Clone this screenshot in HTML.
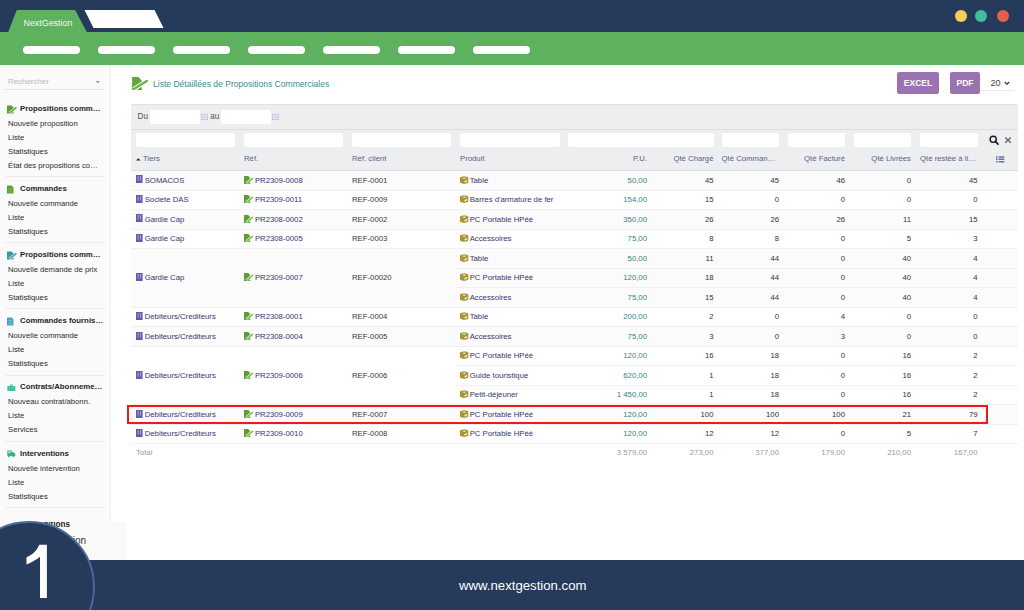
<!DOCTYPE html>
<html><head><meta charset="utf-8">
<style>
*{margin:0;padding:0;box-sizing:border-box}
html,body{width:1024px;height:610px;overflow:hidden;background:#fff;font-family:"Liberation Sans",sans-serif;color:#333}
.a{position:absolute;white-space:nowrap}
.pill{position:absolute;top:46px;height:8px;width:57px;border-radius:4px;background:#fff}
.dot{position:absolute;top:10px;width:12px;height:12px;border-radius:50%}
.si{position:absolute;left:8px;font-size:7.7px;color:#2a2a2a;line-height:10px;white-space:nowrap}
.sh{position:absolute;left:20px;font-size:7.8px;font-weight:bold;color:#1e1e1e;line-height:10px;white-space:nowrap}
.sep{position:absolute;left:5px;width:100px;height:1px;background:#ebebeb}
.tb{font-size:7.75px;line-height:10px}
.btn{position:absolute;top:72px;height:22px;background:#9b72b0;color:#fff;font-weight:bold;font-size:8.5px;line-height:22px;text-align:center;border-radius:2px}
</style></head><body>
<div class="a" style="left:0;top:0;width:1024px;height:32px;background:#263a5c"></div>
<div class="a" style="left:0;top:32px;width:1024px;height:33px;background:#5db15f"></div>
<svg class="a" style="left:0;top:0" width="200" height="40"><path d="M8 32.5 L16.2 11.2 Q16.8 10 18 10 L74 10 Q75.2 10 75.8 11.2 L87 32.5 Z" fill="#5db15f"/><path d="M84.5 10 L154.5 10 L163.5 28 L93.5 28 Z" fill="#fff"/></svg>
<div class="a" style="left:23.5px;top:18px;font-size:8.9px;line-height:11px;color:#f4f8f4">NextGestion</div>
<div class="dot" style="left:954.5px;background:#f8ce5a"></div>
<div class="dot" style="left:975px;background:#3fbf9f"></div>
<div class="dot" style="left:997px;background:#e4604c"></div>
<div class="pill" style="left:23px"></div>
<div class="pill" style="left:98px"></div>
<div class="pill" style="left:173px"></div>
<div class="pill" style="left:248px"></div>
<div class="pill" style="left:323px"></div>
<div class="pill" style="left:398px"></div>
<div class="pill" style="left:473px"></div>
<div class="a" style="left:0;top:65px;width:111px;height:456.5px;background:#fafafa;border-right:1px solid #efefef"></div>
<div class="a" style="left:8px;top:77.2px;font-size:7.9px;line-height:10px;color:#b8b8b8">Rechercher</div>
<svg class="a" style="left:95.8px;top:81.2px" width="4" height="3"><path d="M0 0h3.6L1.8 2.3z" fill="#888"/></svg>
<div class="a" style="left:5px;top:88.5px;width:98px;height:1px;background:#e3e3e3"></div>
<svg class="a" style="left:7px;top:104.5px" width="11" height="9" viewBox="0 0 11 9"><path d="M0 0.5H4.6L6.6 2.5V8.5H0Z" fill="#5ba12f"/><path d="M2.4 8L9.6 2.2" stroke="#f8f8f8" stroke-width="2.6"/><path d="M3 7.5L9.4 2.4" stroke="#5ba12f" stroke-width="1.5"/><path d="M2 8.4l0.5-1.6 1.1 1z" fill="#5ba12f"/></svg>
<div class="sh" style="top:103.5px">Propositions comm…</div>
<div class="si" style="top:118.5px">Nouvelle proposition</div>
<div class="si" style="top:132.5px">Liste</div>
<div class="si" style="top:146.5px">Statistiques</div>
<div class="si" style="top:160.5px">État des propositions co…</div>
<div class="sep" style="top:176.0px"></div>
<svg class="a" style="left:7px;top:184.7px" width="8" height="9" viewBox="0 0 8 9"><path d="M0 0.5h4.5l2 2v6H0z" fill="#5ba12f"/><path d="M1.3 3.5h4M1.3 5.3h4M1.3 7h4" stroke="#fff" stroke-width="0.5" opacity=".45"/></svg>
<div class="sh" style="top:183.7px">Commandes</div>
<div class="si" style="top:198.7px">Nouvelle commande</div>
<div class="si" style="top:212.7px">Liste</div>
<div class="si" style="top:226.7px">Statistiques</div>
<div class="sep" style="top:242.2px"></div>
<svg class="a" style="left:7px;top:250.9px" width="11" height="9" viewBox="0 0 11 9"><path d="M0 0.5H4.6L6.6 2.5V8.5H0Z" fill="#3c9aa6"/><path d="M2.4 8L9.6 2.2" stroke="#f8f8f8" stroke-width="2.6"/><path d="M3 7.5L9.4 2.4" stroke="#3c9aa6" stroke-width="1.5"/><path d="M2 8.4l0.5-1.6 1.1 1z" fill="#3c9aa6"/></svg>
<div class="sh" style="top:249.9px">Propositions comm…</div>
<div class="si" style="top:264.9px">Nouvelle demande de prix</div>
<div class="si" style="top:278.9px">Liste</div>
<div class="si" style="top:292.9px">Statistiques</div>
<div class="sep" style="top:308.4px"></div>
<svg class="a" style="left:7px;top:317.1px" width="8" height="9" viewBox="0 0 8 9"><path d="M0 0.5h4.5l2 2v6H0z" fill="#45a5c2"/><path d="M1.3 3.5h4M1.3 5.3h4M1.3 7h4" stroke="#fff" stroke-width="0.5" opacity=".45"/></svg>
<div class="sh" style="top:316.1px">Commandes fournis…</div>
<div class="si" style="top:331.1px">Nouvelle commande</div>
<div class="si" style="top:345.1px">Liste</div>
<div class="si" style="top:359.1px">Statistiques</div>
<div class="sep" style="top:374.6px"></div>
<svg class="a" style="left:7px;top:383.3px" width="9" height="9" viewBox="0 0 9 9"><path d="M2.7 1.5h3v1.5h2.6V8H0.4V3h2.3z" fill="#3cc0a0"/><path d="M3.4 2.2h1.6" stroke="#fff" stroke-width="0.6"/><path d="M2.5 3v5M6 3v5" stroke="#fff" stroke-width="0.4" opacity=".4"/></svg>
<div class="sh" style="top:382.3px">Contrats/Abonneme…</div>
<div class="si" style="top:397.3px">Nouveau contrat/abonn.</div>
<div class="si" style="top:411.3px">Liste</div>
<div class="si" style="top:425.3px">Services</div>
<div class="sep" style="top:440.8px"></div>
<svg class="a" style="left:7px;top:448.6px" width="9" height="9" viewBox="0 0 9 9"><path d="M0.3 1.5h4.5v1.8h2L8.3 5V7H0.3z" fill="#34b28e"/><rect x="1.3" y="2.4" width="2.2" height="1.6" fill="#fff" opacity=".7"/><circle cx="2" cy="7.3" r="0.9" fill="#34b28e"/><circle cx="6.3" cy="7.3" r="0.9" fill="#34b28e"/></svg>
<div class="sh" style="top:448.5px">Interventions</div>
<div class="si" style="top:463.5px">Nouvelle intervention</div>
<div class="si" style="top:477.5px">Liste</div>
<div class="si" style="top:491.5px">Statistiques</div>
<div class="sep" style="top:507.0px"></div>
<svg class="a" style="left:130px;top:75px" width="20" height="17" viewBox="0 0 20 17"><path d="M2.1 2H8.3L11.8 5.5V15H2.1Z" fill="#62a53c"/><path d="M3.8 14.2L17.6 5.6" stroke="#fff" stroke-width="4.4"/><path d="M4.6 13.5L16.8 6" stroke="#6db34a" stroke-width="2.6" stroke-linecap="round"/><path d="M3.4 14.4l0.6-2 1.6 1.4z" fill="#6db34a"/></svg>
<div class="a" style="left:153px;top:79px;font-size:8.55px;line-height:11px;color:#3d8c8c">Liste Détaillées de Propositions Commerciales</div>
<div class="btn" style="left:897px;width:42px">EXCEL</div>
<div class="btn" style="left:950px;width:30px">PDF</div>
<div class="a" style="left:990.5px;top:78px;font-size:9px;line-height:11px;color:#444">20</div>
<svg class="a" style="left:1004px;top:81px" width="6" height="5"><path d="M0.8 1l2.2 2.2L5.2 1" stroke="#333" stroke-width="1.2" fill="none"/></svg>
<div class="a" style="left:980px;top:90px;width:34px;height:1px;background:#e8e8e8"></div>
<div class="a" style="left:131px;top:104px;width:887px;height:67px;background:#eceef0;border-top:1px solid #e0e1e4"></div>
<div class="a" style="left:131px;top:129px;width:887px;height:1px;background:#dcdde0"></div>
<div class="a" style="left:137.5px;top:111.5px;font-size:8.2px;line-height:10px;color:#555">Du</div>
<div class="a" style="left:149.5px;top:109.5px;width:50.3px;height:14.5px;background:#fff;border-radius:2px"></div>
<svg class="a" style="left:200.5px;top:113.6px" width="7" height="6" viewBox="0 0 7 6"><rect x="0.4" y="0.4" width="6" height="5.2" fill="#ece6f6" stroke="#c9bde3" stroke-width="0.8"/><rect x="2" y="2.4" width="3" height="1" fill="#c2b6de"/></svg>
<div class="a" style="left:210.3px;top:111.5px;font-size:8.2px;line-height:10px;color:#555">au</div>
<div class="a" style="left:221px;top:109.5px;width:49.5px;height:14.5px;background:#fff;border-radius:2px"></div>
<svg class="a" style="left:271.5px;top:113.6px" width="7" height="6" viewBox="0 0 7 6"><rect x="0.4" y="0.4" width="6" height="5.2" fill="#ece6f6" stroke="#c9bde3" stroke-width="0.8"/><rect x="2" y="2.4" width="3" height="1" fill="#c2b6de"/></svg>
<div class="a" style="left:135.6px;top:133px;width:99.4px;height:14px;background:#fff;border-radius:2px"></div>
<div class="a" style="left:243.8px;top:133px;width:99.0px;height:14px;background:#fff;border-radius:2px"></div>
<div class="a" style="left:351.5px;top:133px;width:99.5px;height:14px;background:#fff;border-radius:2px"></div>
<div class="a" style="left:459.7px;top:133px;width:100.0px;height:14px;background:#fff;border-radius:2px"></div>
<div class="a" style="left:567.5px;top:133px;width:146.1px;height:14px;background:#fff;border-radius:2px"></div>
<div class="a" style="left:721.5px;top:133px;width:57.5px;height:14px;background:#fff;border-radius:2px"></div>
<div class="a" style="left:788px;top:133px;width:57.0px;height:14px;background:#fff;border-radius:2px"></div>
<div class="a" style="left:854px;top:133px;width:57.0px;height:14px;background:#fff;border-radius:2px"></div>
<div class="a" style="left:920px;top:133px;width:57.5px;height:14px;background:#fff;border-radius:2px"></div>
<svg class="a" style="left:988px;top:134px" width="12" height="12" viewBox="0 0 12 12"><circle cx="5.2" cy="5.3" r="3.1" stroke="#1a1a1a" stroke-width="1.4" fill="none"/><path d="M7.5 7.6L10 10.1" stroke="#1a1a1a" stroke-width="1.7" stroke-linecap="round"/></svg>
<svg class="a" style="left:1004px;top:136px" width="8" height="8" viewBox="0 0 8 8"><path d="M1.3 1.5L6.7 6.8M6.7 1.5L1.3 6.8" stroke="#6a6a6a" stroke-width="1.5"/></svg>
<svg class="a" style="left:135.8px;top:157.6px" width="5" height="3"><path d="M0 2.4L2.3 0.2 4.6 2.4z" fill="#262a4a"/></svg>
<div class="a tb" style="left:143px;top:154.2px;color:#5a5f8c">Tiers</div>
<div class="a tb" style="left:244px;top:154.2px;color:#5a5f8c">Réf.</div>
<div class="a tb" style="left:352px;top:154.2px;color:#5a5f8c">Réf. client</div>
<div class="a tb" style="left:460px;top:154.2px;color:#5a5f8c">Produit</div>
<div class="a tb" style="right:377px;top:154.2px;color:#5a5f8c">P.U.</div>
<div class="a tb" style="right:310.5px;top:154.2px;color:#5a5f8c">Qté Chargé</div>
<div class="a tb" style="left:721.5px;top:154.2px;color:#5a5f8c">Qté Comman…</div>
<div class="a tb" style="right:179px;top:154.2px;color:#5a5f8c">Qté Facturé</div>
<div class="a tb" style="right:113px;top:154.2px;color:#5a5f8c">Qté Livrées</div>
<div class="a tb" style="left:920px;top:154.2px;color:#5a5f8c">Qté restée à li…</div>
<svg class="a" style="left:996px;top:156px" width="9" height="7" viewBox="0 0 9 7"><path d="M0 0.3h1.6v1.5H0zM0 2.6h1.6v1.5H0zM0 4.9h1.6v1.5H0zM2.6 0.3H8.3v1.5H2.6zM2.6 2.6H8.3v1.5H2.6zM2.6 4.9H8.3v1.5H2.6z" fill="#6b6ea6"/></svg>
<div class="a" style="left:131px;top:170.1px;width:887px;height:19.5px;background:#fbfbfb"></div>
<svg class="a" style="left:135.9px;top:175.4px" width="7" height="8" viewBox="0 0 7 8"><rect x="0" y="0" width="6.6" height="8" fill="#625da8"/><path d="M2.1 1v4.6M4.5 1v4.6" stroke="#c9c6f0" stroke-width="0.9" opacity=".75"/></svg>
<div class="a tb" style="left:144.7px;top:175.5px;color:#33376e">SOMACOS</div>
<svg class="a" style="left:243.8px;top:175.7px" width="11" height="9" viewBox="0 0 11 9"><path d="M0 0H4.2L6.2 2V8H0Z" fill="#5b9e32"/><path d="M2.2 7.6L9.2 1.8" stroke="#fff" stroke-width="2.6"/><path d="M2.8 7.1L9 2" stroke="#72b44c" stroke-width="1.5"/><path d="M1.8 8l0.5-1.6 1.1 1z" fill="#72b44c"/></svg>
<div class="a tb" style="left:254.9px;top:175.5px;color:#33376e">PR2309-0008</div>
<div class="a tb" style="left:352px;top:175.5px;color:#383838">REF-0001</div>
<svg class="a" style="left:459.7px;top:175.7px" width="9" height="9" viewBox="0 0 9 9"><path d="M4.1 0.2L7.6 1.1Q8.3 1.3 8.3 2V6.2Q8.3 6.8 7.7 7.1L4.1 8.1 0.6 7.1Q0 6.8 0 6.2V2Q0 1.3 0.6 1.1Z" fill="#a89632"/><path d="M2.3 2.1Q4.2 0.9 6.1 2.1Q4.2 3.3 2.3 2.1Z" fill="#fff" opacity=".92"/><path d="M4.5 5L7.1 3.9V5.6L4.5 6.7Z" fill="#fff" opacity=".85"/></svg>
<div class="a tb" style="left:469.7px;top:175.5px;color:#33376e">Table</div>
<div class="a tb" style="right:377px;top:175.5px;color:#31837f">50,00</div>
<div class="a tb" style="right:310.5px;top:175.5px;color:#333">45</div>
<div class="a tb" style="right:245px;top:175.5px;color:#333">45</div>
<div class="a tb" style="right:179px;top:175.5px;color:#333">46</div>
<div class="a tb" style="right:113px;top:175.5px;color:#333">0</div>
<div class="a tb" style="right:46.5px;top:175.5px;color:#333">45</div>
<div class="a" style="left:131px;top:189.6px;width:887px;height:19.5px;background:#fff"></div>
<svg class="a" style="left:135.9px;top:194.9px" width="7" height="8" viewBox="0 0 7 8"><rect x="0" y="0" width="6.6" height="8" fill="#625da8"/><path d="M2.1 1v4.6M4.5 1v4.6" stroke="#c9c6f0" stroke-width="0.9" opacity=".75"/></svg>
<div class="a tb" style="left:144.7px;top:195.0px;color:#33376e">Societe DAS</div>
<svg class="a" style="left:243.8px;top:195.2px" width="11" height="9" viewBox="0 0 11 9"><path d="M0 0H4.2L6.2 2V8H0Z" fill="#5b9e32"/><path d="M2.2 7.6L9.2 1.8" stroke="#fff" stroke-width="2.6"/><path d="M2.8 7.1L9 2" stroke="#72b44c" stroke-width="1.5"/><path d="M1.8 8l0.5-1.6 1.1 1z" fill="#72b44c"/></svg>
<div class="a tb" style="left:254.9px;top:195.0px;color:#33376e">PR2309-0011</div>
<div class="a tb" style="left:352px;top:195.0px;color:#383838">REF-0009</div>
<svg class="a" style="left:459.7px;top:195.2px" width="9" height="9" viewBox="0 0 9 9"><path d="M4.1 0.2L7.6 1.1Q8.3 1.3 8.3 2V6.2Q8.3 6.8 7.7 7.1L4.1 8.1 0.6 7.1Q0 6.8 0 6.2V2Q0 1.3 0.6 1.1Z" fill="#a89632"/><path d="M2.3 2.1Q4.2 0.9 6.1 2.1Q4.2 3.3 2.3 2.1Z" fill="#fff" opacity=".92"/><path d="M4.5 5L7.1 3.9V5.6L4.5 6.7Z" fill="#fff" opacity=".85"/></svg>
<div class="a tb" style="left:469.7px;top:195.0px;color:#33376e">Barres d'armature de fer</div>
<div class="a tb" style="right:377px;top:195.0px;color:#31837f">154,00</div>
<div class="a tb" style="right:310.5px;top:195.0px;color:#333">15</div>
<div class="a tb" style="right:245px;top:195.0px;color:#333">0</div>
<div class="a tb" style="right:179px;top:195.0px;color:#333">0</div>
<div class="a tb" style="right:113px;top:195.0px;color:#333">0</div>
<div class="a tb" style="right:46.5px;top:195.0px;color:#333">0</div>
<div class="a" style="left:131px;top:209.1px;width:887px;height:19.5px;background:#fbfbfb"></div>
<svg class="a" style="left:135.9px;top:214.4px" width="7" height="8" viewBox="0 0 7 8"><rect x="0" y="0" width="6.6" height="8" fill="#625da8"/><path d="M2.1 1v4.6M4.5 1v4.6" stroke="#c9c6f0" stroke-width="0.9" opacity=".75"/></svg>
<div class="a tb" style="left:144.7px;top:214.5px;color:#33376e">Gardie Cap</div>
<svg class="a" style="left:243.8px;top:214.7px" width="11" height="9" viewBox="0 0 11 9"><path d="M0 0H4.2L6.2 2V8H0Z" fill="#5b9e32"/><path d="M2.2 7.6L9.2 1.8" stroke="#fff" stroke-width="2.6"/><path d="M2.8 7.1L9 2" stroke="#72b44c" stroke-width="1.5"/><path d="M1.8 8l0.5-1.6 1.1 1z" fill="#72b44c"/></svg>
<div class="a tb" style="left:254.9px;top:214.5px;color:#33376e">PR2308-0002</div>
<div class="a tb" style="left:352px;top:214.5px;color:#383838">REF-0002</div>
<svg class="a" style="left:459.7px;top:214.7px" width="9" height="9" viewBox="0 0 9 9"><path d="M4.1 0.2L7.6 1.1Q8.3 1.3 8.3 2V6.2Q8.3 6.8 7.7 7.1L4.1 8.1 0.6 7.1Q0 6.8 0 6.2V2Q0 1.3 0.6 1.1Z" fill="#a89632"/><path d="M2.3 2.1Q4.2 0.9 6.1 2.1Q4.2 3.3 2.3 2.1Z" fill="#fff" opacity=".92"/><path d="M4.5 5L7.1 3.9V5.6L4.5 6.7Z" fill="#fff" opacity=".85"/></svg>
<div class="a tb" style="left:469.7px;top:214.5px;color:#33376e">PC Portable HPéé</div>
<div class="a tb" style="right:377px;top:214.5px;color:#31837f">350,00</div>
<div class="a tb" style="right:310.5px;top:214.5px;color:#333">26</div>
<div class="a tb" style="right:245px;top:214.5px;color:#333">26</div>
<div class="a tb" style="right:179px;top:214.5px;color:#333">26</div>
<div class="a tb" style="right:113px;top:214.5px;color:#333">11</div>
<div class="a tb" style="right:46.5px;top:214.5px;color:#333">15</div>
<div class="a" style="left:131px;top:228.6px;width:887px;height:19.5px;background:#fff"></div>
<svg class="a" style="left:135.9px;top:233.9px" width="7" height="8" viewBox="0 0 7 8"><rect x="0" y="0" width="6.6" height="8" fill="#625da8"/><path d="M2.1 1v4.6M4.5 1v4.6" stroke="#c9c6f0" stroke-width="0.9" opacity=".75"/></svg>
<div class="a tb" style="left:144.7px;top:234.0px;color:#33376e">Gardie Cap</div>
<svg class="a" style="left:243.8px;top:234.2px" width="11" height="9" viewBox="0 0 11 9"><path d="M0 0H4.2L6.2 2V8H0Z" fill="#5b9e32"/><path d="M2.2 7.6L9.2 1.8" stroke="#fff" stroke-width="2.6"/><path d="M2.8 7.1L9 2" stroke="#72b44c" stroke-width="1.5"/><path d="M1.8 8l0.5-1.6 1.1 1z" fill="#72b44c"/></svg>
<div class="a tb" style="left:254.9px;top:234.0px;color:#33376e">PR2308-0005</div>
<div class="a tb" style="left:352px;top:234.0px;color:#383838">REF-0003</div>
<svg class="a" style="left:459.7px;top:234.2px" width="9" height="9" viewBox="0 0 9 9"><path d="M4.1 0.2L7.6 1.1Q8.3 1.3 8.3 2V6.2Q8.3 6.8 7.7 7.1L4.1 8.1 0.6 7.1Q0 6.8 0 6.2V2Q0 1.3 0.6 1.1Z" fill="#a89632"/><path d="M2.3 2.1Q4.2 0.9 6.1 2.1Q4.2 3.3 2.3 2.1Z" fill="#fff" opacity=".92"/><path d="M4.5 5L7.1 3.9V5.6L4.5 6.7Z" fill="#fff" opacity=".85"/></svg>
<div class="a tb" style="left:469.7px;top:234.0px;color:#33376e">Accessoires</div>
<div class="a tb" style="right:377px;top:234.0px;color:#31837f">75,00</div>
<div class="a tb" style="right:310.5px;top:234.0px;color:#333">8</div>
<div class="a tb" style="right:245px;top:234.0px;color:#333">8</div>
<div class="a tb" style="right:179px;top:234.0px;color:#333">0</div>
<div class="a tb" style="right:113px;top:234.0px;color:#333">5</div>
<div class="a tb" style="right:46.5px;top:234.0px;color:#333">3</div>
<div class="a" style="left:131px;top:248.1px;width:887px;height:58.5px;background:#fbfbfb"></div>
<svg class="a" style="left:135.9px;top:273.0px" width="7" height="8" viewBox="0 0 7 8"><rect x="0" y="0" width="6.6" height="8" fill="#625da8"/><path d="M2.1 1v4.6M4.5 1v4.6" stroke="#c9c6f0" stroke-width="0.9" opacity=".75"/></svg>
<div class="a tb" style="left:144.7px;top:273.1px;color:#33376e">Gardie Cap</div>
<svg class="a" style="left:243.8px;top:273.2px" width="11" height="9" viewBox="0 0 11 9"><path d="M0 0H4.2L6.2 2V8H0Z" fill="#5b9e32"/><path d="M2.2 7.6L9.2 1.8" stroke="#fff" stroke-width="2.6"/><path d="M2.8 7.1L9 2" stroke="#72b44c" stroke-width="1.5"/><path d="M1.8 8l0.5-1.6 1.1 1z" fill="#72b44c"/></svg>
<div class="a tb" style="left:254.9px;top:273.1px;color:#33376e">PR2309-0007</div>
<div class="a tb" style="left:352px;top:273.1px;color:#383838">REF-00020</div>
<svg class="a" style="left:459.7px;top:253.7px" width="9" height="9" viewBox="0 0 9 9"><path d="M4.1 0.2L7.6 1.1Q8.3 1.3 8.3 2V6.2Q8.3 6.8 7.7 7.1L4.1 8.1 0.6 7.1Q0 6.8 0 6.2V2Q0 1.3 0.6 1.1Z" fill="#a89632"/><path d="M2.3 2.1Q4.2 0.9 6.1 2.1Q4.2 3.3 2.3 2.1Z" fill="#fff" opacity=".92"/><path d="M4.5 5L7.1 3.9V5.6L4.5 6.7Z" fill="#fff" opacity=".85"/></svg>
<div class="a tb" style="left:469.7px;top:253.6px;color:#33376e">Table</div>
<div class="a tb" style="right:377px;top:253.6px;color:#31837f">50,00</div>
<div class="a tb" style="right:310.5px;top:253.6px;color:#333">11</div>
<div class="a tb" style="right:245px;top:253.6px;color:#333">44</div>
<div class="a tb" style="right:179px;top:253.6px;color:#333">0</div>
<div class="a tb" style="right:113px;top:253.6px;color:#333">40</div>
<div class="a tb" style="right:46.5px;top:253.6px;color:#333">4</div>
<svg class="a" style="left:459.7px;top:273.2px" width="9" height="9" viewBox="0 0 9 9"><path d="M4.1 0.2L7.6 1.1Q8.3 1.3 8.3 2V6.2Q8.3 6.8 7.7 7.1L4.1 8.1 0.6 7.1Q0 6.8 0 6.2V2Q0 1.3 0.6 1.1Z" fill="#a89632"/><path d="M2.3 2.1Q4.2 0.9 6.1 2.1Q4.2 3.3 2.3 2.1Z" fill="#fff" opacity=".92"/><path d="M4.5 5L7.1 3.9V5.6L4.5 6.7Z" fill="#fff" opacity=".85"/></svg>
<div class="a tb" style="left:469.7px;top:273.1px;color:#33376e">PC Portable HPéé</div>
<div class="a tb" style="right:377px;top:273.1px;color:#31837f">120,00</div>
<div class="a tb" style="right:310.5px;top:273.1px;color:#333">18</div>
<div class="a tb" style="right:245px;top:273.1px;color:#333">44</div>
<div class="a tb" style="right:179px;top:273.1px;color:#333">0</div>
<div class="a tb" style="right:113px;top:273.1px;color:#333">40</div>
<div class="a tb" style="right:46.5px;top:273.1px;color:#333">4</div>
<svg class="a" style="left:459.7px;top:292.7px" width="9" height="9" viewBox="0 0 9 9"><path d="M4.1 0.2L7.6 1.1Q8.3 1.3 8.3 2V6.2Q8.3 6.8 7.7 7.1L4.1 8.1 0.6 7.1Q0 6.8 0 6.2V2Q0 1.3 0.6 1.1Z" fill="#a89632"/><path d="M2.3 2.1Q4.2 0.9 6.1 2.1Q4.2 3.3 2.3 2.1Z" fill="#fff" opacity=".92"/><path d="M4.5 5L7.1 3.9V5.6L4.5 6.7Z" fill="#fff" opacity=".85"/></svg>
<div class="a tb" style="left:469.7px;top:292.6px;color:#33376e">Accessoires</div>
<div class="a tb" style="right:377px;top:292.6px;color:#31837f">75,00</div>
<div class="a tb" style="right:310.5px;top:292.6px;color:#333">15</div>
<div class="a tb" style="right:245px;top:292.6px;color:#333">44</div>
<div class="a tb" style="right:179px;top:292.6px;color:#333">0</div>
<div class="a tb" style="right:113px;top:292.6px;color:#333">40</div>
<div class="a tb" style="right:46.5px;top:292.6px;color:#333">4</div>
<div class="a" style="left:131px;top:306.6px;width:887px;height:19.5px;background:#fff"></div>
<svg class="a" style="left:135.9px;top:312.0px" width="7" height="8" viewBox="0 0 7 8"><rect x="0" y="0" width="6.6" height="8" fill="#625da8"/><path d="M2.1 1v4.6M4.5 1v4.6" stroke="#c9c6f0" stroke-width="0.9" opacity=".75"/></svg>
<div class="a tb" style="left:144.7px;top:312.1px;color:#33376e">Debiteurs/Crediteurs</div>
<svg class="a" style="left:243.8px;top:312.2px" width="11" height="9" viewBox="0 0 11 9"><path d="M0 0H4.2L6.2 2V8H0Z" fill="#5b9e32"/><path d="M2.2 7.6L9.2 1.8" stroke="#fff" stroke-width="2.6"/><path d="M2.8 7.1L9 2" stroke="#72b44c" stroke-width="1.5"/><path d="M1.8 8l0.5-1.6 1.1 1z" fill="#72b44c"/></svg>
<div class="a tb" style="left:254.9px;top:312.1px;color:#33376e">PR2308-0001</div>
<div class="a tb" style="left:352px;top:312.1px;color:#383838">REF-0004</div>
<svg class="a" style="left:459.7px;top:312.2px" width="9" height="9" viewBox="0 0 9 9"><path d="M4.1 0.2L7.6 1.1Q8.3 1.3 8.3 2V6.2Q8.3 6.8 7.7 7.1L4.1 8.1 0.6 7.1Q0 6.8 0 6.2V2Q0 1.3 0.6 1.1Z" fill="#a89632"/><path d="M2.3 2.1Q4.2 0.9 6.1 2.1Q4.2 3.3 2.3 2.1Z" fill="#fff" opacity=".92"/><path d="M4.5 5L7.1 3.9V5.6L4.5 6.7Z" fill="#fff" opacity=".85"/></svg>
<div class="a tb" style="left:469.7px;top:312.1px;color:#33376e">Table</div>
<div class="a tb" style="right:377px;top:312.1px;color:#31837f">200,00</div>
<div class="a tb" style="right:310.5px;top:312.1px;color:#333">2</div>
<div class="a tb" style="right:245px;top:312.1px;color:#333">0</div>
<div class="a tb" style="right:179px;top:312.1px;color:#333">4</div>
<div class="a tb" style="right:113px;top:312.1px;color:#333">0</div>
<div class="a tb" style="right:46.5px;top:312.1px;color:#333">0</div>
<div class="a" style="left:131px;top:326.1px;width:887px;height:19.5px;background:#fbfbfb"></div>
<svg class="a" style="left:135.9px;top:331.5px" width="7" height="8" viewBox="0 0 7 8"><rect x="0" y="0" width="6.6" height="8" fill="#625da8"/><path d="M2.1 1v4.6M4.5 1v4.6" stroke="#c9c6f0" stroke-width="0.9" opacity=".75"/></svg>
<div class="a tb" style="left:144.7px;top:331.6px;color:#33376e">Debiteurs/Crediteurs</div>
<svg class="a" style="left:243.8px;top:331.7px" width="11" height="9" viewBox="0 0 11 9"><path d="M0 0H4.2L6.2 2V8H0Z" fill="#5b9e32"/><path d="M2.2 7.6L9.2 1.8" stroke="#fff" stroke-width="2.6"/><path d="M2.8 7.1L9 2" stroke="#72b44c" stroke-width="1.5"/><path d="M1.8 8l0.5-1.6 1.1 1z" fill="#72b44c"/></svg>
<div class="a tb" style="left:254.9px;top:331.6px;color:#33376e">PR2308-0004</div>
<div class="a tb" style="left:352px;top:331.6px;color:#383838">REF-0005</div>
<svg class="a" style="left:459.7px;top:331.7px" width="9" height="9" viewBox="0 0 9 9"><path d="M4.1 0.2L7.6 1.1Q8.3 1.3 8.3 2V6.2Q8.3 6.8 7.7 7.1L4.1 8.1 0.6 7.1Q0 6.8 0 6.2V2Q0 1.3 0.6 1.1Z" fill="#a89632"/><path d="M2.3 2.1Q4.2 0.9 6.1 2.1Q4.2 3.3 2.3 2.1Z" fill="#fff" opacity=".92"/><path d="M4.5 5L7.1 3.9V5.6L4.5 6.7Z" fill="#fff" opacity=".85"/></svg>
<div class="a tb" style="left:469.7px;top:331.6px;color:#33376e">Accessoires</div>
<div class="a tb" style="right:377px;top:331.6px;color:#31837f">75,00</div>
<div class="a tb" style="right:310.5px;top:331.6px;color:#333">3</div>
<div class="a tb" style="right:245px;top:331.6px;color:#333">0</div>
<div class="a tb" style="right:179px;top:331.6px;color:#333">3</div>
<div class="a tb" style="right:113px;top:331.6px;color:#333">0</div>
<div class="a tb" style="right:46.5px;top:331.6px;color:#333">0</div>
<div class="a" style="left:131px;top:345.6px;width:887px;height:58.5px;background:#fff"></div>
<svg class="a" style="left:135.9px;top:370.5px" width="7" height="8" viewBox="0 0 7 8"><rect x="0" y="0" width="6.6" height="8" fill="#625da8"/><path d="M2.1 1v4.6M4.5 1v4.6" stroke="#c9c6f0" stroke-width="0.9" opacity=".75"/></svg>
<div class="a tb" style="left:144.7px;top:370.6px;color:#33376e">Debiteurs/Crediteurs</div>
<svg class="a" style="left:243.8px;top:370.7px" width="11" height="9" viewBox="0 0 11 9"><path d="M0 0H4.2L6.2 2V8H0Z" fill="#5b9e32"/><path d="M2.2 7.6L9.2 1.8" stroke="#fff" stroke-width="2.6"/><path d="M2.8 7.1L9 2" stroke="#72b44c" stroke-width="1.5"/><path d="M1.8 8l0.5-1.6 1.1 1z" fill="#72b44c"/></svg>
<div class="a tb" style="left:254.9px;top:370.6px;color:#33376e">PR2309-0006</div>
<div class="a tb" style="left:352px;top:370.6px;color:#383838">REF-0006</div>
<svg class="a" style="left:459.7px;top:351.2px" width="9" height="9" viewBox="0 0 9 9"><path d="M4.1 0.2L7.6 1.1Q8.3 1.3 8.3 2V6.2Q8.3 6.8 7.7 7.1L4.1 8.1 0.6 7.1Q0 6.8 0 6.2V2Q0 1.3 0.6 1.1Z" fill="#a89632"/><path d="M2.3 2.1Q4.2 0.9 6.1 2.1Q4.2 3.3 2.3 2.1Z" fill="#fff" opacity=".92"/><path d="M4.5 5L7.1 3.9V5.6L4.5 6.7Z" fill="#fff" opacity=".85"/></svg>
<div class="a tb" style="left:469.7px;top:351.1px;color:#33376e">PC Portable HPéé</div>
<div class="a tb" style="right:377px;top:351.1px;color:#31837f">120,00</div>
<div class="a tb" style="right:310.5px;top:351.1px;color:#333">16</div>
<div class="a tb" style="right:245px;top:351.1px;color:#333">18</div>
<div class="a tb" style="right:179px;top:351.1px;color:#333">0</div>
<div class="a tb" style="right:113px;top:351.1px;color:#333">16</div>
<div class="a tb" style="right:46.5px;top:351.1px;color:#333">2</div>
<svg class="a" style="left:459.7px;top:370.7px" width="9" height="9" viewBox="0 0 9 9"><path d="M4.1 0.2L7.6 1.1Q8.3 1.3 8.3 2V6.2Q8.3 6.8 7.7 7.1L4.1 8.1 0.6 7.1Q0 6.8 0 6.2V2Q0 1.3 0.6 1.1Z" fill="#a89632"/><path d="M2.3 2.1Q4.2 0.9 6.1 2.1Q4.2 3.3 2.3 2.1Z" fill="#fff" opacity=".92"/><path d="M4.5 5L7.1 3.9V5.6L4.5 6.7Z" fill="#fff" opacity=".85"/></svg>
<div class="a tb" style="left:469.7px;top:370.6px;color:#33376e">Guide touristique</div>
<div class="a tb" style="right:377px;top:370.6px;color:#31837f">620,00</div>
<div class="a tb" style="right:310.5px;top:370.6px;color:#333">1</div>
<div class="a tb" style="right:245px;top:370.6px;color:#333">18</div>
<div class="a tb" style="right:179px;top:370.6px;color:#333">0</div>
<div class="a tb" style="right:113px;top:370.6px;color:#333">16</div>
<div class="a tb" style="right:46.5px;top:370.6px;color:#333">2</div>
<svg class="a" style="left:459.7px;top:390.2px" width="9" height="9" viewBox="0 0 9 9"><path d="M4.1 0.2L7.6 1.1Q8.3 1.3 8.3 2V6.2Q8.3 6.8 7.7 7.1L4.1 8.1 0.6 7.1Q0 6.8 0 6.2V2Q0 1.3 0.6 1.1Z" fill="#a89632"/><path d="M2.3 2.1Q4.2 0.9 6.1 2.1Q4.2 3.3 2.3 2.1Z" fill="#fff" opacity=".92"/><path d="M4.5 5L7.1 3.9V5.6L4.5 6.7Z" fill="#fff" opacity=".85"/></svg>
<div class="a tb" style="left:469.7px;top:390.1px;color:#33376e">Petit-déjeuner</div>
<div class="a tb" style="right:377px;top:390.1px;color:#31837f">1 450,00</div>
<div class="a tb" style="right:310.5px;top:390.1px;color:#333">1</div>
<div class="a tb" style="right:245px;top:390.1px;color:#333">18</div>
<div class="a tb" style="right:179px;top:390.1px;color:#333">0</div>
<div class="a tb" style="right:113px;top:390.1px;color:#333">16</div>
<div class="a tb" style="right:46.5px;top:390.1px;color:#333">2</div>
<div class="a" style="left:131px;top:404.1px;width:887px;height:19.5px;background:#fbfbfb"></div>
<svg class="a" style="left:135.9px;top:409.5px" width="7" height="8" viewBox="0 0 7 8"><rect x="0" y="0" width="6.6" height="8" fill="#625da8"/><path d="M2.1 1v4.6M4.5 1v4.6" stroke="#c9c6f0" stroke-width="0.9" opacity=".75"/></svg>
<div class="a tb" style="left:144.7px;top:409.6px;color:#33376e">Debiteurs/Crediteurs</div>
<svg class="a" style="left:243.8px;top:409.7px" width="11" height="9" viewBox="0 0 11 9"><path d="M0 0H4.2L6.2 2V8H0Z" fill="#5b9e32"/><path d="M2.2 7.6L9.2 1.8" stroke="#fff" stroke-width="2.6"/><path d="M2.8 7.1L9 2" stroke="#72b44c" stroke-width="1.5"/><path d="M1.8 8l0.5-1.6 1.1 1z" fill="#72b44c"/></svg>
<div class="a tb" style="left:254.9px;top:409.6px;color:#33376e">PR2309-0009</div>
<div class="a tb" style="left:352px;top:409.6px;color:#383838">REF-0007</div>
<svg class="a" style="left:459.7px;top:409.7px" width="9" height="9" viewBox="0 0 9 9"><path d="M4.1 0.2L7.6 1.1Q8.3 1.3 8.3 2V6.2Q8.3 6.8 7.7 7.1L4.1 8.1 0.6 7.1Q0 6.8 0 6.2V2Q0 1.3 0.6 1.1Z" fill="#a89632"/><path d="M2.3 2.1Q4.2 0.9 6.1 2.1Q4.2 3.3 2.3 2.1Z" fill="#fff" opacity=".92"/><path d="M4.5 5L7.1 3.9V5.6L4.5 6.7Z" fill="#fff" opacity=".85"/></svg>
<div class="a tb" style="left:469.7px;top:409.6px;color:#33376e">PC Portable HPéé</div>
<div class="a tb" style="right:377px;top:409.6px;color:#31837f">120,00</div>
<div class="a tb" style="right:310.5px;top:409.6px;color:#333">100</div>
<div class="a tb" style="right:245px;top:409.6px;color:#333">100</div>
<div class="a tb" style="right:179px;top:409.6px;color:#333">100</div>
<div class="a tb" style="right:113px;top:409.6px;color:#333">21</div>
<div class="a tb" style="right:46.5px;top:409.6px;color:#333">79</div>
<div class="a" style="left:131px;top:423.6px;width:887px;height:19.5px;background:#fff"></div>
<svg class="a" style="left:135.9px;top:429.0px" width="7" height="8" viewBox="0 0 7 8"><rect x="0" y="0" width="6.6" height="8" fill="#625da8"/><path d="M2.1 1v4.6M4.5 1v4.6" stroke="#c9c6f0" stroke-width="0.9" opacity=".75"/></svg>
<div class="a tb" style="left:144.7px;top:429.1px;color:#33376e">Debiteurs/Crediteurs</div>
<svg class="a" style="left:243.8px;top:429.2px" width="11" height="9" viewBox="0 0 11 9"><path d="M0 0H4.2L6.2 2V8H0Z" fill="#5b9e32"/><path d="M2.2 7.6L9.2 1.8" stroke="#fff" stroke-width="2.6"/><path d="M2.8 7.1L9 2" stroke="#72b44c" stroke-width="1.5"/><path d="M1.8 8l0.5-1.6 1.1 1z" fill="#72b44c"/></svg>
<div class="a tb" style="left:254.9px;top:429.1px;color:#33376e">PR2309-0010</div>
<div class="a tb" style="left:352px;top:429.1px;color:#383838">REF-0008</div>
<svg class="a" style="left:459.7px;top:429.2px" width="9" height="9" viewBox="0 0 9 9"><path d="M4.1 0.2L7.6 1.1Q8.3 1.3 8.3 2V6.2Q8.3 6.8 7.7 7.1L4.1 8.1 0.6 7.1Q0 6.8 0 6.2V2Q0 1.3 0.6 1.1Z" fill="#a89632"/><path d="M2.3 2.1Q4.2 0.9 6.1 2.1Q4.2 3.3 2.3 2.1Z" fill="#fff" opacity=".92"/><path d="M4.5 5L7.1 3.9V5.6L4.5 6.7Z" fill="#fff" opacity=".85"/></svg>
<div class="a tb" style="left:469.7px;top:429.1px;color:#33376e">PC Portable HPéé</div>
<div class="a tb" style="right:377px;top:429.1px;color:#31837f">120,00</div>
<div class="a tb" style="right:310.5px;top:429.1px;color:#333">12</div>
<div class="a tb" style="right:245px;top:429.1px;color:#333">12</div>
<div class="a tb" style="right:179px;top:429.1px;color:#333">0</div>
<div class="a tb" style="right:113px;top:429.1px;color:#333">5</div>
<div class="a tb" style="right:46.5px;top:429.1px;color:#333">7</div>
<div class="a" style="left:131px;top:189.6px;width:887px;height:1px;background:#f0f0f0"></div>
<div class="a" style="left:131px;top:209.1px;width:887px;height:1px;background:#f0f0f0"></div>
<div class="a" style="left:131px;top:228.6px;width:887px;height:1px;background:#f0f0f0"></div>
<div class="a" style="left:131px;top:248.1px;width:887px;height:1px;background:#f0f0f0"></div>
<div class="a" style="left:131px;top:306.6px;width:887px;height:1px;background:#f0f0f0"></div>
<div class="a" style="left:455.5px;top:267.6px;width:562.5px;height:1px;background:#f0f0f0"></div>
<div class="a" style="left:455.5px;top:287.1px;width:562.5px;height:1px;background:#f0f0f0"></div>
<div class="a" style="left:131px;top:326.1px;width:887px;height:1px;background:#f0f0f0"></div>
<div class="a" style="left:131px;top:345.6px;width:887px;height:1px;background:#f0f0f0"></div>
<div class="a" style="left:131px;top:404.1px;width:887px;height:1px;background:#f0f0f0"></div>
<div class="a" style="left:455.5px;top:365.1px;width:562.5px;height:1px;background:#f0f0f0"></div>
<div class="a" style="left:455.5px;top:384.6px;width:562.5px;height:1px;background:#f0f0f0"></div>
<div class="a" style="left:131px;top:423.6px;width:887px;height:1px;background:#f0f0f0"></div>
<div class="a" style="left:131px;top:443.1px;width:887px;height:1px;background:#f0f0f0"></div>
<div class="a" style="left:131px;top:170px;width:887px;height:1px;background:#dcdde0"></div>
<div class="a" style="left:127.2px;top:404.8px;width:861px;height:19.2px;border:2px solid #f01818"></div>
<div class="a tb" style="left:136px;top:447.9px;color:#999">Total</div>
<div class="a tb" style="right:377px;top:447.9px;color:#999">3 579,00</div>
<div class="a tb" style="right:310.5px;top:447.9px;color:#999">273,00</div>
<div class="a tb" style="right:245px;top:447.9px;color:#999">377,00</div>
<div class="a tb" style="right:179px;top:447.9px;color:#999">179,00</div>
<div class="a tb" style="right:113px;top:447.9px;color:#999">210,00</div>
<div class="a tb" style="right:46.5px;top:447.9px;color:#999">167,00</div>
<div class="a" style="left:0;top:521.5px;width:126px;height:39px;background:#f9f9f9;overflow:hidden"><div class="a" style="right:56px;top:-1.8px;font-size:8.2px;font-weight:bold;line-height:10px;color:#1e1e1e">Expéditions</div><div class="a" style="right:40px;top:13px;font-size:10px;line-height:12px;color:#333">Nouvelle expédition</div></div>
<div class="a" style="left:0;top:560px;width:1024px;height:50px;background:#263a5c"></div>
<div class="a" style="left:459px;top:578px;font-size:13.2px;line-height:16px;color:#fff">www.nextgestion.com</div>
<div class="a" style="left:-37px;top:521px;width:132px;height:132px;border-radius:50%;background:#263a5c;border:2px solid #4a6898"></div>
<svg class="a" style="left:0;top:0" width="100" height="610"><path d="M39.2 544.7H46.9V598H40V556.8C36.5 559.8 31 562.8 26.5 564.4V557.2C32.5 554.6 37.2 550.5 39.2 544.7Z" fill="#fff"/></svg>
</body></html>
